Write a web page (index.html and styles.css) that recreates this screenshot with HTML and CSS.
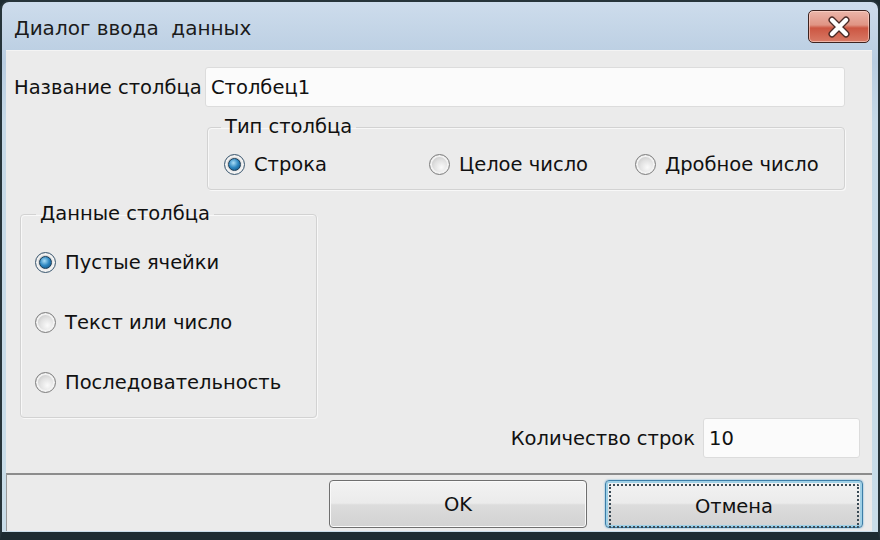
FILE: index.html
```html
<!DOCTYPE html>
<html lang="ru">
<head>
    <meta charset="UTF-8">
    <title>Диалог ввода данных</title>
    <link rel="stylesheet" href="styles.css">
</head>
<body>
    <div class="window">
        <div class="titlebar">
            <span class="title">Диалог ввода&nbsp; данных</span>
            <button class="close" type="button">
                <svg width="28" height="22" viewBox="0 0 28 22">
                    <path d="M7 4 L21 18 M21 4 L7 18" stroke="#4a2a26" stroke-width="7" stroke-linecap="round"/>
                    <path d="M7 4 L21 18 M21 4 L7 18" stroke="#ffffff" stroke-width="4.4" stroke-linecap="round"/>
                </svg>
            </button>
        </div>

        <div class="client">
            <div class="content">
                <div class="name-row">
                    <label for="col-name">Название столбца</label>
                    <input type="text" id="col-name" class="field name-field" value="Столбец1">
                </div>

                <fieldset class="group type-group">
                    <legend>Тип столбца</legend>
                    <div class="type-options">
                        <div class="option"><span class="radio checked"></span>Строка</div>
                        <div class="option"><span class="radio"></span>Целое число</div>
                        <div class="option"><span class="radio"></span>Дробное число</div>
                    </div>
                </fieldset>

                <fieldset class="group data-group">
                    <legend>Данные столбца</legend>
                    <div class="option tall"><span class="radio checked"></span>Пустые ячейки</div>
                    <div class="option tall"><span class="radio"></span>Текст или число</div>
                    <div class="option tall"><span class="radio"></span>Последовательность</div>
                </fieldset>

                <div class="count-row">
                    <label for="rows">Количество строк</label>
                    <input type="text" id="rows" class="field count-field" value="10">
                </div>
            </div>

            <div class="footer">
                <button class="btn" type="button">OK</button>
                <button class="btn focused" type="button"><span>Отмена</span></button>
            </div>
        </div>
    </div>
</body>
</html>
```

FILE: styles.css
```css
body {
    margin: 0;
    background-color: #1d2b31;
    font-family: "DejaVu Sans", Tahoma, sans-serif;
    font-size: 19.5px;
    color: #111;
}
.window {
    width: 880px;
    height: 540px;
    box-sizing: border-box;
    border: 2px solid #26343a;
    border-bottom: 8px solid #1d2b31;
    border-radius: 9px 9px 0 0;
    padding: 0 6px 1px 4px;
    background: linear-gradient(#cddcec, #b9cde1 60px, #c6d9e7 120px, #c9dde9);
    display: flex;
    flex-direction: column;
}
.titlebar {
    height: 48px;
    flex: none;
    display: flex;
    align-items: flex-start;
    justify-content: space-between;
    padding-left: 8px;
}
.title {
    margin-top: 14px;
    font-size: 20px;
    color: #1b1b1b;
}
.close {
    margin-top: 8px;
    margin-right: 2px;
    width: 62px;
    height: 33px;
    padding: 0;
    border: 1px solid #3d2320;
    border-radius: 5px;
    background: linear-gradient(#ebb6aa, #e09484 45%, #cc5642 55%, #d87a66);
    box-shadow: inset 0 0 0 1px rgba(255, 220, 210, 0.6);
    display: flex;
    align-items: center;
    justify-content: center;
}
.client {
    flex: 1;
    background-color: #ebebeb;
    border-top: 1px solid #f4f4f4;
    display: flex;
    flex-direction: column;
}
.content {
    flex: 1;
    padding: 16px 12px 0 8px;
}
.name-row {
    display: flex;
    align-items: center;
    justify-content: space-between;
    margin-right: 15px;
}
.field {
    box-sizing: border-box;
    height: 40px;
    border: 1px solid #dcdcdc;
    border-radius: 3px;
    background-color: #fbfbfb;
    font-family: inherit;
    font-size: 19.5px;
    color: #111;
    padding: 0 5px;
    outline: none;
}
.name-field {
    width: 640px;
}
.group {
    margin: 0;
    padding: 0;
    border: 1px solid #d2d2d2;
    border-radius: 4px;
    box-shadow: inset 1px 1px 0 #f8f8f8, 1px 1px 0 #f8f8f8;
}
.group legend {
    line-height: 24px;
    padding: 0 4px;
}
.type-group {
    margin: 8px 15px 0 193px;
    padding: 5px 0 5px 16px;
}
.type-group legend {
    margin-left: -3px;
}
.type-options {
    display: grid;
    grid-template-columns: 205px 206px 205px;
}
.option {
    display: flex;
    align-items: center;
    height: 40px;
}
.option.tall {
    height: 60px;
}
.data-group {
    margin: 12px 0 0 6px;
    width: 297px;
    box-sizing: border-box;
    padding: 6px 0 5px 14px;
}
.data-group legend {
    margin-left: 1px;
}
.radio {
    position: relative;
    flex: none;
    box-sizing: border-box;
    width: 21px;
    height: 21px;
    margin-right: 9px;
    border-radius: 50%;
    border: 1px solid #7e7e7e;
    background: radial-gradient(circle at 60% 65%, #fafafa, #e0e0e0 45%, #b2b2b2);
    box-shadow: inset 0 0 0 2px #f2f2f2;
}
.radio.checked {
    border-color: #3b5870;
}
.radio.checked::after {
    content: "";
    position: absolute;
    left: 3px;
    top: 3px;
    width: 13px;
    height: 13px;
    box-sizing: border-box;
    border-radius: 50%;
    border: 1px solid #183c58;
    background: radial-gradient(circle at 40% 35%, #a8ddf7, #2c86c0 50%, #0f4a78);
}
.count-row {
    display: flex;
    align-items: center;
    justify-content: flex-end;
    gap: 8px;
}
.count-field {
    width: 157px;
}
.footer {
    flex: none;
    height: 58px;
    box-sizing: border-box;
    border-top: 2px solid #8c8c8c;
    border-left: 1px solid #9a9a9a;
    padding: 5px 9px 0 0;
    display: flex;
    justify-content: flex-end;
    gap: 18px;
}
.btn {
    width: 258px;
    height: 48px;
    box-sizing: border-box;
    border: 1px solid #6f6f6f;
    border-radius: 4px;
    background: linear-gradient(#f3f3f3, #ebebeb 48%, #dcdcdc 52%, #d2d2d2);
    box-shadow: inset 0 0 0 1px #fafafa;
    font-family: inherit;
    font-size: 19.5px;
    color: #111;
    padding: 0;
}
.btn.focused {
    border: 1px solid #3c7ea8;
    box-shadow: inset 0 0 0 2px #9fd0e6, 0 0 2px #5fa8d0;
    padding: 3px;
}
.btn.focused span {
    display: flex;
    align-items: center;
    justify-content: center;
    height: 100%;
    border: 2px dotted #3a4a55;
    border-radius: 2px;
}
```
